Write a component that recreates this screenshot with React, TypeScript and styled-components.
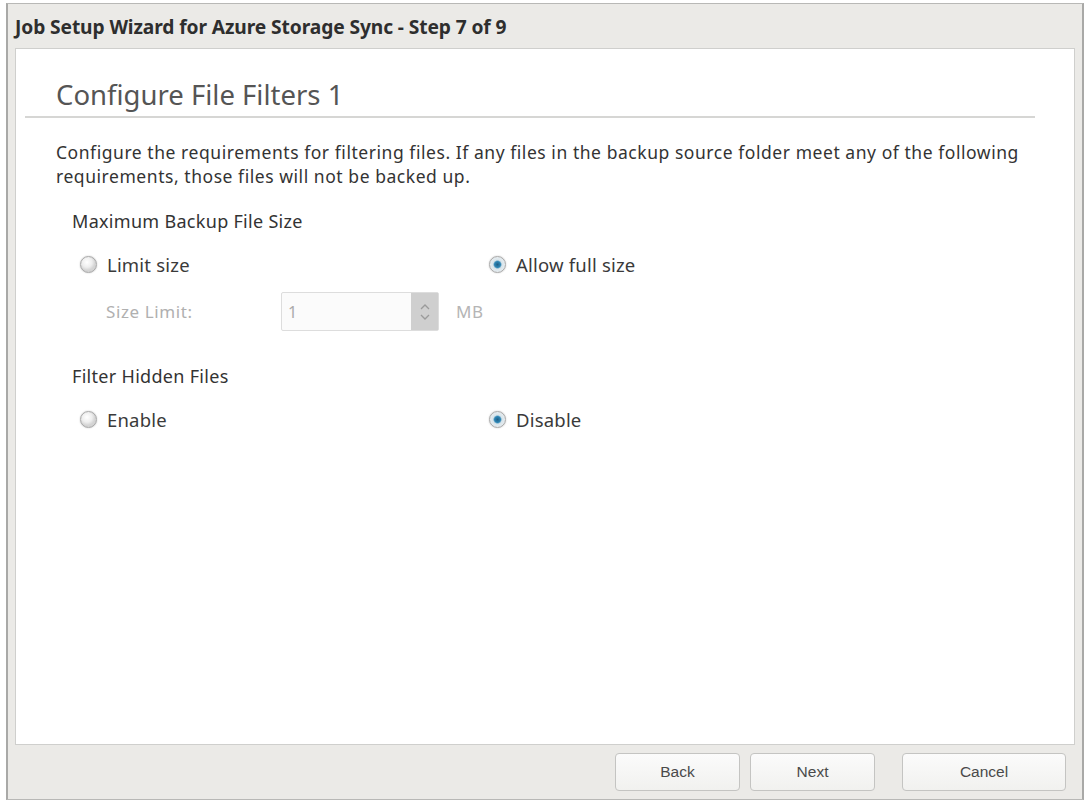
import React, { useState } from 'react';
import styled, { createGlobalStyle } from 'styled-components';

const GlobalStyle = createGlobalStyle`
  html, body {
    margin: 0;
    padding: 0;
    background: #ffffff;
  }
  body {
    font-family: "Noto Sans", "DejaVu Sans", sans-serif;
  }
`;

const Window = styled.div`
  box-sizing: border-box;
  margin: 3px 0 0 6px;
  width: 1078px;
  height: 797px;
  display: flex;
  flex-direction: column;
  background: #ebeae7;
  border: 1px solid #b8b8b6;
  border-left: 2px solid #a9a9a7;
  border-right: 2px solid #a9a9a7;
`;

const TitleBar = styled.div`
  height: 44px;
  display: flex;
  align-items: center;
  padding-left: 7px;
  font-size: 19.2px;
  font-weight: bold;
  color: #2e2e2e;
  letter-spacing: -0.1px;
`;

const Panel = styled.div`
  flex: 1;
  margin: 0 7px;
  background: #ffffff;
  border: 1px solid #cfcfcd;
  display: flex;
  flex-direction: column;
`;

const Heading = styled.h1`
  margin: 29px 0 0 40px;
  font-size: 27.5px;
  font-weight: normal;
  color: #555555;
  line-height: 34px;
`;

const Rule = styled.hr`
  margin: 4px 39px 0 9px;
  border: none;
  border-top: 2px solid #d6d6d4;
`;

const Description = styled.p`
  margin: 22px 30px 0 40px;
  font-size: 17.5px;
  line-height: 24px;
  color: #333333;
  letter-spacing: 0.55px;
  white-space: nowrap;
`;

const Section = styled.div<{ $top: number }>`
  margin: ${(p) => p.$top}px 0 0 56px;
  display: flex;
  flex-direction: column;
`;

const SectionTitle = styled.div`
  font-size: 18px;
  color: #333333;
  line-height: 20px;
  letter-spacing: 0.3px;
`;

const RadioRow = styled.div`
  display: grid;
  grid-template-columns: 409px auto;
  height: 20px;
  align-items: center;
  margin: 21px 0 0 8px;
`;

const RadioLabel = styled.label`
  display: flex;
  align-items: center;
  gap: 10px;
  font-size: 18.5px;
  color: #3a3a3a;
  cursor: pointer;
  letter-spacing: 0.2px;
`;

const RadioDot = styled.span<{ $checked: boolean }>`
  box-sizing: border-box;
  width: 17px;
  height: 17px;
  border-radius: 50%;
  border: 1px solid #a8a8a8;
  background: ${(p) =>
    p.$checked
      ? 'radial-gradient(circle, #1f5f86 0, #2e86b5 3px, #d8e4ea 4.5px, #e9eef1 8px)'
      : 'radial-gradient(circle at 40% 35%, #ffffff 0, #eeeeee 5px, #d4d4d4 8px)'};
  box-shadow: 0 0 1.5px #b5b5b5;
`;

const SizeRow = styled.div`
  display: flex;
  align-items: center;
  margin: 20px 0 0 34px;
  font-size: 17px;
  color: #b0b0b0;
  letter-spacing: 0.6px;
`;

const SizeLabel = styled.span`
  width: 175px;
`;

const SpinBox = styled.div`
  box-sizing: border-box;
  width: 158px;
  height: 39px;
  display: flex;
  border: 1px solid #dddddd;
  border-radius: 2px;
  background: #fbfbfb;
`;

const SpinInput = styled.div`
  flex: 1;
  display: flex;
  align-items: center;
  padding-left: 6px;
  font-size: 16px;
  color: #aaaaaa;
`;

const SpinButtons = styled.div`
  width: 27px;
  background: #cfcfcf;
  display: flex;
  align-items: center;
  justify-content: center;
`;

const Unit = styled.span`
  margin-left: 17px;
  color: #b5b5b5;
`;

const Footer = styled.div`
  height: 54px;
  display: flex;
  align-items: center;
  justify-content: flex-end;
  padding-right: 16px;
`;

const Button = styled.button<{ $wide?: boolean; $gapLeft?: number }>`
  box-sizing: border-box;
  width: ${(p) => (p.$wide ? 164 : 125)}px;
  height: 38px;
  margin-left: ${(p) => p.$gapLeft ?? 0}px;
  border: 1px solid #c4c4c2;
  border-radius: 4px;
  background: linear-gradient(#fbfbfb, #f1f1ef);
  font-family: "Liberation Sans", Arial, sans-serif;
  font-size: 15.5px;
  color: #4a4a4a;
  cursor: pointer;
`;

const Radio: React.FC<{ label: string; checked: boolean; onSelect: () => void }> = ({
  label,
  checked,
  onSelect,
}) => (
  <RadioLabel onClick={onSelect}>
    <RadioDot $checked={checked} />
    {label}
  </RadioLabel>
);

const App: React.FC = () => {
  const [sizeMode, setSizeMode] = useState<'limit' | 'full'>('full');
  const [hidden, setHidden] = useState<'enable' | 'disable'>('disable');

  return (
    <>
      <GlobalStyle />
      <Window>
        <TitleBar>Job Setup Wizard for Azure Storage Sync - Step 7 of 9</TitleBar>
        <Panel>
          <Heading>Configure File Filters 1</Heading>
          <Rule />
          <Description>
            Configure the requirements for filtering files. If any files in the backup source folder meet any of the following
            <br />
            requirements, those files will not be backed up.
          </Description>

          <Section $top={23}>
            <SectionTitle>Maximum Backup File Size</SectionTitle>
            <RadioRow>
              <Radio label="Limit size" checked={sizeMode === 'limit'} onSelect={() => setSizeMode('limit')} />
              <Radio label="Allow full size" checked={sizeMode === 'full'} onSelect={() => setSizeMode('full')} />
            </RadioRow>
            <SizeRow>
              <SizeLabel>Size Limit:</SizeLabel>
              <SpinBox>
                <SpinInput>1</SpinInput>
                <SpinButtons>
                  <svg width="12" height="22" viewBox="0 0 12 22" fill="none" stroke="#9a9a9a" strokeWidth="1.3">
                    <path d="M2 8 L6 4 L10 8" />
                    <path d="M2 14 L6 18 L10 14" />
                  </svg>
                </SpinButtons>
              </SpinBox>
              <Unit>MB</Unit>
            </SizeRow>
          </Section>

          <Section $top={35}>
            <SectionTitle>Filter Hidden Files</SectionTitle>
            <RadioRow>
              <Radio label="Enable" checked={hidden === 'enable'} onSelect={() => setHidden('enable')} />
              <Radio label="Disable" checked={hidden === 'disable'} onSelect={() => setHidden('disable')} />
            </RadioRow>
          </Section>
        </Panel>
        <Footer>
          <Button>Back</Button>
          <Button $gapLeft={10}>Next</Button>
          <Button $wide $gapLeft={27}>Cancel</Button>
        </Footer>
      </Window>
    </>
  );
};

export default App;
